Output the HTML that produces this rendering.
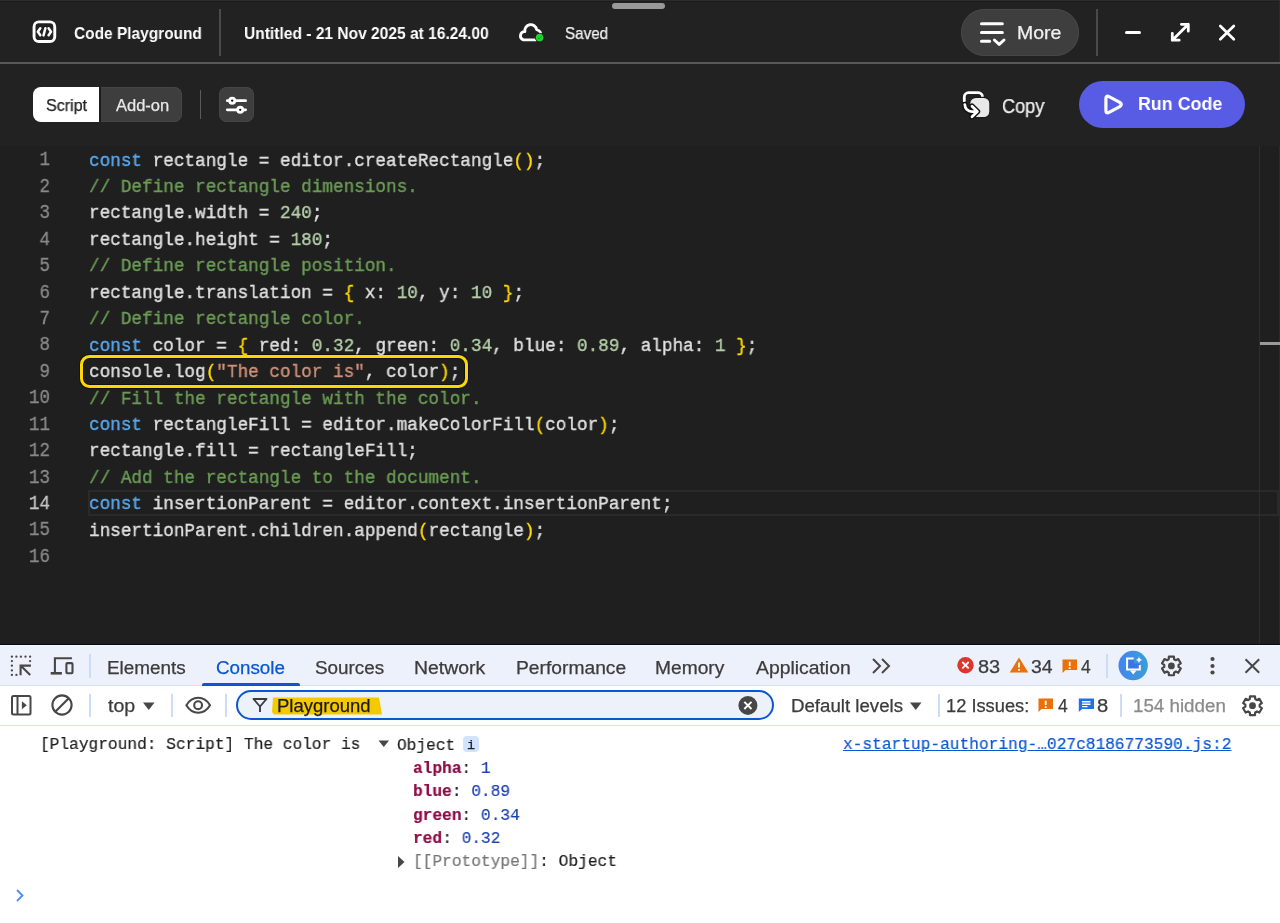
<!DOCTYPE html>
<html><head><meta charset="utf-8">
<style>
*{margin:0;padding:0;box-sizing:border-box}
html,body{width:1280px;height:923px;overflow:hidden;background:#1f1f1f}
body>*{will-change:transform}
body{position:relative;font-family:"Liberation Sans",sans-serif}
.a{position:absolute}
.t{position:absolute;white-space:pre;line-height:1;transform-origin:0 0;-webkit-text-stroke:0.25px currentColor}
#hdr{left:0;top:0;width:1280px;height:63px;background:#222222}
#tb{left:0;top:62px;width:1280px;height:84px;background:#222222;border-top:2px solid #595959}
#ed{left:0;top:146px;width:1280px;height:499px;background:#1f1f1f}
.code{position:absolute;font-family:"Liberation Mono",monospace;font-size:19px;white-space:pre;color:#e0e0e0;line-height:26.43px;transform:scaleX(0.9304);transform-origin:0 0;-webkit-text-stroke:0.38px currentColor}
.ln{position:absolute;left:0;width:50px;text-align:right;font-family:"Liberation Mono",monospace;font-size:20.5px;color:#8a8a8a;line-height:26.43px;transform:scaleX(0.8623);transform-origin:100% 0;-webkit-text-stroke:0.3px currentColor}
.k{color:#58a8ee}.c{color:#6a9c55}.n{color:#b5cea8}.b{color:#ffd700}.s{color:#ce9178}
#dt{left:0;top:645px;width:1280px;height:278px;background:#ffffff}
.m{position:absolute;white-space:pre;font-family:"Liberation Mono",monospace;font-size:17.3px;line-height:18px;color:#1f1f1f;transform:scaleX(0.9364);transform-origin:0 0;-webkit-text-stroke:0.2px currentColor}
.pn{color:#8c0b46}.nv{color:#1a3fb0}
</style></head><body>
<!-- header -->
<div id="hdr" class="a"></div>
<div class="a" style="left:0;top:0;width:1280px;height:1.2px;background:#2c2c2c"></div>
<div class="a" style="left:0;top:1.2px;width:1280px;height:1px;background:#1c1c1c"></div>
<div class="a" style="left:1278.5px;top:0;width:1.5px;height:62px;background:#2b2b2b"></div>
<div class="a" style="left:612px;top:3px;width:53px;height:6px;border-radius:3px;background:#999"></div>
<svg class="a" style="left:26px;top:14px" width="36" height="36" viewBox="26 14 36 36">
 <rect x="34.05" y="21.85" width="20.7" height="19.7" rx="4.8" fill="none" stroke="#fff" stroke-width="2.9"/>
 <path d="M40.3 28.3 L37.9 31.8 L40.3 35.3 M45.4 28.2 L43.5 35.4 M48.6 28.3 L51 31.8 L48.6 35.3" fill="none" stroke="#fff" stroke-width="2.5" stroke-linecap="round" stroke-linejoin="round"/>
</svg>
<div class="t" style="left:74px;top:25px;font-size:17px;font-weight:bold;color:#fff;transform:scaleX(0.909);-webkit-text-stroke:0">Code Playground</div>
<div class="a" style="left:218.6px;top:9px;width:2px;height:47px;background:#4a4a4a"></div>
<div class="t" style="left:244px;top:24.8px;font-size:17px;font-weight:bold;color:#fff;transform:scaleX(0.915);-webkit-text-stroke:0">Untitled - 21 Nov 2025 at 16.24.00</div>
<svg class="a" style="left:510px;top:14px" width="40" height="36" viewBox="510 14 40 36">
 <path d="M536 39.8 H523.4 A4.2 4.2 0 0 1 524.9 31.6 A5.7 5.7 0 0 1 536.6 29.6 Q539.6 30.3 540.5 32.6" fill="none" stroke="#fff" stroke-width="2.8" stroke-linecap="round" stroke-linejoin="round"/>
 <circle cx="539.6" cy="37.6" r="4.3" fill="#20d52f" stroke="#1a1a1a" stroke-width="0.9"/>
 <path d="M537.6 37.9 L539 39.1 L541.6 36.3" fill="none" stroke="#139a22" stroke-width="0.9"/>
</svg>
<div class="t" style="left:565px;top:24.9px;font-size:16.5px;color:#f2f2f2;transform:scaleX(0.922)">Saved</div>
<div class="a" style="left:961px;top:9px;width:118px;height:47px;border-radius:24px;background:#3e3e3e;box-shadow:inset 0 0 0 1px #474747"></div>
<svg class="a" style="left:970px;top:14px" width="40" height="36" viewBox="970 14 40 36">
 <path d="M981.5 23.75 H1002.3 M981.5 32.5 H1002.3 M981.5 41.3 H989.6" fill="none" stroke="#fff" stroke-width="3.1" stroke-linecap="round"/>
 <path d="M994.4 40 L999.2 44.4 L1004 40" fill="none" stroke="#fff" stroke-width="3" stroke-linecap="round" stroke-linejoin="round"/>
</svg>
<div class="t" style="left:1017px;top:24.3px;font-size:18.5px;color:#f0f0f0;transform:scaleX(1.052)">More</div>
<div class="a" style="left:1096.2px;top:9px;width:2px;height:47px;background:#4a4a4a"></div>
<div class="a" style="left:1125.3px;top:30.8px;width:15.6px;height:3px;background:#fff;border-radius:1.5px"></div>
<svg class="a" style="left:1165px;top:18px" width="30" height="28" viewBox="1165 18 30 28">
 <path d="M1172.3 40.2 L1188.3 24.3 M1181.4 24.3 H1188.3 V31.2 M1172.3 33.3 V40.2 H1179.2" fill="none" stroke="#fff" stroke-width="2.8" stroke-linecap="round" stroke-linejoin="round"/>
</svg>
<svg class="a" style="left:1214px;top:20px" width="26" height="26" viewBox="1214 20 26 26">
 <path d="M1220.3 26 L1233.8 39.3 M1233.8 26 L1220.3 39.3" fill="none" stroke="#fff" stroke-width="2.7" stroke-linecap="round"/>
</svg>
<!-- toolbar -->
<div id="tb" class="a"></div>
<div class="a" style="left:33px;top:87px;width:149px;height:35px;border-radius:8px;background:#3e3e3e;box-shadow:inset 0 0 0 1px #464646"></div>
<div class="a" style="left:33px;top:87px;width:66px;height:35px;border-radius:8px 0 0 8px;background:#fff"></div>
<div class="a" style="left:99px;top:87px;width:1.5px;height:35px;background:#1e1e1e"></div>
<div class="t" style="left:46px;top:97.4px;font-size:16.5px;color:#222;transform:scaleX(0.973)">Script</div>
<div class="t" style="left:116px;top:97.4px;font-size:16.5px;color:#e8e8e8">Add-on</div>
<div class="a" style="left:199.8px;top:90px;width:1.3px;height:29px;background:#5a5a5a"></div>
<div class="a" style="left:219px;top:87px;width:35px;height:35px;border-radius:8px;background:#3e3e3e;box-shadow:inset 0 0 0 1px #464646"></div>
<svg class="a" style="left:219px;top:87px" width="35" height="35" viewBox="219 87 35 35">
 <path d="M227.3 100.7 H245.6 M227.3 109.8 H245.6" stroke="#fff" stroke-width="2.8" stroke-linecap="round"/>
 <circle cx="232.2" cy="100.7" r="2.55" fill="#111" stroke="#fff" stroke-width="2.8"/>
 <circle cx="240.2" cy="109.8" r="2.55" fill="#111" stroke="#fff" stroke-width="2.8"/>
</svg>
<svg class="a" style="left:955px;top:84px" width="44" height="40" viewBox="955 84 44 40">
 <path d="M964.3 101 V97 A4.3 4.3 0 0 1 968.6 92.7 H978.3 A4.2 4.2 0 0 1 982.5 96.9" fill="none" stroke="#fff" stroke-width="2.8" stroke-linecap="round"/>
 <rect x="969.7" y="97.4" width="20.2" height="20.2" rx="6" fill="#e8e8e8" stroke="#1a1a1a" stroke-width="1.2"/>
 <path d="M964.8 104.6 A7 7 0 0 0 971.8 111.6 H976.5 M972 106.2 L977.4 111.5 L972 116.8" fill="none" stroke="#111" stroke-width="5.6" stroke-linecap="round" stroke-linejoin="round"/>
 <path d="M964.8 104.6 A7 7 0 0 0 971.8 111.6 H976.5 M972 106.2 L977.4 111.5 L972 116.8" fill="none" stroke="#fff" stroke-width="2.8" stroke-linecap="round" stroke-linejoin="round"/>
</svg>
<div class="t" style="left:1001.5px;top:95.7px;font-size:20px;color:#eeeeee;transform:scaleX(0.905)">Copy</div>
<div class="a" style="left:1079px;top:81px;width:166px;height:47px;border-radius:24px;background:#585ce5"></div>
<svg class="a" style="left:1098px;top:88px" width="32" height="32" viewBox="1098 88 32 32">
 <path d="M1105.9 98.6 Q1105.9 95 1109 96.6 L1119.8 102.4 Q1122.8 104.5 1119.8 106.6 L1109 112.4 Q1105.9 114 1105.9 110.4 Z" fill="none" stroke="#fff" stroke-width="3.2" stroke-linejoin="round"/>
</svg>
<div class="t" style="left:1138px;top:94px;font-size:19.2px;font-weight:bold;color:#fff;transform:scaleX(0.93);-webkit-text-stroke:0">Run Code</div>
<!-- editor -->
<div id="ed" class="a"></div>
<div class="a" style="left:88px;top:490px;width:1191px;height:26px;border:2px solid #2a2a2a"></div>
<div class="a" style="left:1259px;top:146px;width:1px;height:499px;background:#2e2e2e"></div>
<div class="a" style="left:1279px;top:146px;width:1px;height:499px;background:#2a2a2a"></div>
<div class="a" style="left:1260px;top:342px;width:20px;height:3px;background:#9a9a9a"></div>
<div class="a" style="left:80px;top:355px;width:388px;height:33px;border:3px solid #ffd700;border-radius:9.5px;box-shadow:0 0 0 1px rgba(0,0,0,.45),inset 0 0 0 1px rgba(0,0,0,.45)"></div>
<div class="ln" style="top:147.43px;color:#8a8a8a">1</div>
<div class="code" style="left:88.8px;top:147.63px"><span class="k">const</span> rectangle = editor.createRectangle<span class="b">()</span>;</div>
<div class="ln" style="top:173.86px;color:#8a8a8a">2</div>
<div class="code" style="left:88.8px;top:174.06px"><span class="c">// Define rectangle dimensions.</span></div>
<div class="ln" style="top:200.29px;color:#8a8a8a">3</div>
<div class="code" style="left:88.8px;top:200.49px">rectangle.width = <span class="n">240</span>;</div>
<div class="ln" style="top:226.72px;color:#8a8a8a">4</div>
<div class="code" style="left:88.8px;top:226.92px">rectangle.height = <span class="n">180</span>;</div>
<div class="ln" style="top:253.15px;color:#8a8a8a">5</div>
<div class="code" style="left:88.8px;top:253.35px"><span class="c">// Define rectangle position.</span></div>
<div class="ln" style="top:279.58px;color:#8a8a8a">6</div>
<div class="code" style="left:88.8px;top:279.78px">rectangle.translation = <span class="b">{</span> x: <span class="n">10</span>, y: <span class="n">10</span> <span class="b">}</span>;</div>
<div class="ln" style="top:306.01px;color:#8a8a8a">7</div>
<div class="code" style="left:88.8px;top:306.21px"><span class="c">// Define rectangle color.</span></div>
<div class="ln" style="top:332.44px;color:#8a8a8a">8</div>
<div class="code" style="left:88.8px;top:332.64px"><span class="k">const</span> color = <span class="b">{</span> red: <span class="n">0.32</span>, green: <span class="n">0.34</span>, blue: <span class="n">0.89</span>, alpha: <span class="n">1</span> <span class="b">}</span>;</div>
<div class="ln" style="top:358.87px;color:#8a8a8a">9</div>
<div class="code" style="left:88.8px;top:359.07px">console.log<span class="b">(</span><span class="s">"The color is"</span>, color<span class="b">)</span>;</div>
<div class="ln" style="top:385.30px;color:#8a8a8a">10</div>
<div class="code" style="left:88.8px;top:385.50px"><span class="c">// Fill the rectangle with the color.</span></div>
<div class="ln" style="top:411.73px;color:#8a8a8a">11</div>
<div class="code" style="left:88.8px;top:411.93px"><span class="k">const</span> rectangleFill = editor.makeColorFill<span class="b">(</span>color<span class="b">)</span>;</div>
<div class="ln" style="top:438.16px;color:#8a8a8a">12</div>
<div class="code" style="left:88.8px;top:438.36px">rectangle.fill = rectangleFill;</div>
<div class="ln" style="top:464.59px;color:#8a8a8a">13</div>
<div class="code" style="left:88.8px;top:464.79px"><span class="c">// Add the rectangle to the document.</span></div>
<div class="ln" style="top:491.02px;color:#c6c6c6">14</div>
<div class="code" style="left:88.8px;top:491.22px"><span class="k">const</span> insertionParent = editor.context.insertionParent;</div>
<div class="ln" style="top:517.45px;color:#8a8a8a">15</div>
<div class="code" style="left:88.8px;top:517.65px">insertionParent.children.append<span class="b">(</span>rectangle<span class="b">)</span>;</div>
<div class="ln" style="top:543.88px;color:#8a8a8a">16</div>
<div class="code" style="left:88.8px;top:544.08px"></div>
<div class="a" style="left:0;top:643.5px;width:1280px;height:1.5px;background:#0a0a0a"></div>
<!-- devtools -->
<div id="dt" class="a"></div>
<div class="a" style="left:0;top:645px;width:1280px;height:41px;background:#edf1fb;border-top:1px solid #f2f9ff;border-bottom:1px solid #d3e3fd"></div>
<div class="a" style="left:0;top:725px;width:1280px;height:1px;background:#d3e3fd"></div>
<svg class="a" style="left:5px;top:650px" width="75" height="32" viewBox="5 650 75 32">
 <circle cx="11.9" cy="656.7" r="1.15" fill="#474747"/><circle cx="16.4" cy="656.7" r="1.15" fill="#474747"/><circle cx="20.9" cy="656.7" r="1.15" fill="#474747"/><circle cx="25.5" cy="656.7" r="1.15" fill="#474747"/><circle cx="30.1" cy="656.7" r="1.15" fill="#474747"/><circle cx="11.9" cy="661.1" r="1.15" fill="#474747"/><circle cx="11.9" cy="665.7" r="1.15" fill="#474747"/><circle cx="11.9" cy="670.4" r="1.15" fill="#474747"/><circle cx="11.9" cy="674.9" r="1.15" fill="#474747"/><circle cx="16.4" cy="674.9" r="1.15" fill="#474747"/><circle cx="30.1" cy="661.1" r="1.15" fill="#474747"/>
 <path d="M20.6 675.3 V665.6 H30.9 M20.6 665.6 L30.2 675" fill="none" stroke="#474747" stroke-width="2.1"/>
 <path d="M54.9 673.1 V658.2 H71.9" fill="none" stroke="#474747" stroke-width="2.1"/>
 <path d="M50.7 673.3 H61.9" fill="none" stroke="#474747" stroke-width="2.6"/>
 <rect x="66.4" y="663.1" width="6.1" height="10.2" rx="1" fill="none" stroke="#474747" stroke-width="2.1"/>
</svg>

<div class="a" style="left:89px;top:654px;width:1.6px;height:24px;background:#cddcf6"></div>
<div class="t" style="left:107px;top:660px;font-size:17.5px;color:#3c3c3c;transform:scaleX(1.079)">Elements</div>
<div class="t" style="left:216px;top:660px;font-size:17.5px;color:#0b57d0;transform:scaleX(1.073)">Console</div>
<div class="a" style="left:202px;top:683.3px;width:98px;height:3.2px;background:#0b57d0;border-radius:2px 2px 0 0"></div>
<div class="t" style="left:314.5px;top:660px;font-size:17.5px;color:#3c3c3c;transform:scaleX(1.078)">Sources</div>
<div class="t" style="left:413.5px;top:660px;font-size:17.5px;color:#3c3c3c;transform:scaleX(1.11)">Network</div>
<div class="t" style="left:515.5px;top:660px;font-size:17.5px;color:#3c3c3c;transform:scaleX(1.10)">Performance</div>
<div class="t" style="left:655px;top:660px;font-size:17.5px;color:#3c3c3c;transform:scaleX(1.097)">Memory</div>
<div class="t" style="left:756px;top:660px;font-size:17.5px;color:#3c3c3c;transform:scaleX(1.106)">Application</div>
<svg class="a" style="left:871px;top:657px" width="21" height="18" viewBox="0 0 21 18">
 <path d="M2 2 L9 9 L2 16 M11 2 L18 9 L11 16" fill="none" stroke="#474747" stroke-width="2"/>
</svg>
<svg class="a" style="left:957px;top:657px" width="18" height="17" viewBox="0 0 18 17">
 <circle cx="8.5" cy="8.2" r="8.2" fill="#dc362e"/>
 <path d="M5.3 5 L11.7 11.4 M11.7 5 L5.3 11.4" stroke="#fff" stroke-width="1.8"/>
</svg>
<div class="t" style="left:977.5px;top:659px;font-size:17.5px;color:#3c3c3c;transform:scaleX(1.14)">83</div>
<svg class="a" style="left:1009px;top:657px" width="20" height="16" viewBox="0 0 20 16">
 <path d="M10 0.6 L19.3 15.5 H0.7 Z" fill="#e8710a"/>
 <path d="M10 5.5 V10.5 M10 12 V13.8" stroke="#fff" stroke-width="1.8"/>
</svg>
<div class="t" style="left:1031px;top:659px;font-size:17.5px;color:#3c3c3c;transform:scaleX(1.11)">34</div>
<svg class="a" style="left:1062px;top:659px" width="16" height="15" viewBox="0 0 16 15">
 <path d="M0.5 0.5 H15 V11 H3.5 L0.5 14 Z" fill="#e8710a"/>
 <path d="M7.7 2.8 V7 M7.7 8.3 V10" stroke="#fff" stroke-width="1.8"/>
</svg>
<div class="t" style="left:1081px;top:659px;font-size:17.5px;color:#3c3c3c">4</div>
<div class="a" style="left:1106px;top:654px;width:1.6px;height:24px;background:#cddcf6"></div>
<svg class="a" style="left:1115px;top:648px" width="36" height="36" viewBox="1115 648 36 36">
 <defs><linearGradient id="g1" x1="0" y1="0" x2="1" y2="0"><stop offset="0" stop-color="#4285f0"/><stop offset="1" stop-color="#3a9ed6"/></linearGradient></defs>
 <circle cx="1133.15" cy="665.55" r="14.7" fill="url(#g1)"/>
 <path d="M1127.1 658.4 H1134 V663.5 H1139.8 V669.6 H1127.1 Z" fill="#3a76e4"/>
 <path d="M1133.7 658.4 H1127.1 V669.6 H1139.8 V665" fill="none" stroke="#fff" stroke-width="2"/>
 <path d="M1129.9 670.5 H1136.5 L1133.2 674.6 Z" fill="#fff"/>
 <path d="M1139 656.6 Q1139.4 659.6 1142.4 660 Q1139.4 660.4 1139 663.4 Q1138.6 660.4 1135.6 660 Q1138.6 659.6 1139 656.6 Z" fill="#fff"/>
</svg>
<svg class="a" style="left:1155px;top:650px" width="33" height="32" viewBox="1155 650 33 32">
 <path d="M1168.70 659.22 L1168.89 656.53 L1173.91 656.53 L1174.10 659.22 L1175.83 660.23 L1178.26 659.04 L1180.77 663.39 L1178.53 664.90 L1178.53 666.90 L1180.77 668.41 L1178.26 672.76 L1175.83 671.57 L1174.10 672.58 L1173.91 675.27 L1168.89 675.27 L1168.70 672.58 L1166.97 671.57 L1164.54 672.76 L1162.03 668.41 L1164.27 666.90 L1164.27 664.90 L1162.03 663.39 L1164.54 659.04 L1166.97 660.23 Z" fill="none" stroke="#474747" stroke-width="2.2" stroke-linejoin="round"/>
 <circle cx="1171.4" cy="665.9" r="3.4" fill="#474747"/>
</svg>
<svg class="a" style="left:1208px;top:656px" width="9" height="20" viewBox="0 0 9 20">
 <circle cx="4.5" cy="3" r="2.1" fill="#474747"/><circle cx="4.5" cy="10" r="2.1" fill="#474747"/><circle cx="4.5" cy="16.5" r="2.1" fill="#474747"/>
</svg>
<svg class="a" style="left:1243px;top:657px" width="19" height="18" viewBox="0 0 19 18">
 <path d="M2.5 2.2 L16.2 15.8 M16.2 2.2 L2.5 15.8" stroke="#474747" stroke-width="2"/>
</svg>
<!-- console toolbar -->
<svg class="a" style="left:10px;top:694px" width="22" height="22" viewBox="0 0 22 22">
 <rect x="2" y="2" width="18.5" height="18.5" rx="1.5" fill="none" stroke="#474747" stroke-width="2"/>
 <path d="M7.5 2 V20.5" stroke="#474747" stroke-width="2"/>
 <path d="M11.9 7.3 L16.8 11.2 L11.9 15.2 Z" fill="#474747"/>
</svg>
<svg class="a" style="left:50px;top:693px" width="24" height="24" viewBox="0 0 24 24">
 <circle cx="12" cy="12" r="9.6" fill="none" stroke="#474747" stroke-width="2.1"/>
 <path d="M5.5 18.5 L18.5 5.5" stroke="#474747" stroke-width="2.1"/>
</svg>
<div class="a" style="left:89px;top:694px;width:1.6px;height:23px;background:#cddcf6"></div>
<div class="t" style="left:108px;top:698px;font-size:17.5px;color:#3c3c3c;transform:scaleX(1.12)">top</div>
<svg class="a" style="left:142px;top:701px" width="14" height="10" viewBox="0 0 14 10">
 <path d="M1 1.5 H12.5 L6.75 9 Z" fill="#474747"/>
</svg>
<div class="a" style="left:171px;top:694px;width:1.6px;height:23px;background:#cddcf6"></div>
<svg class="a" style="left:180px;top:690px" width="36" height="30" viewBox="180 690 36 30">
 <path d="M186.4 705.2 C190 699.2 194 697.8 198.2 697.8 C202.4 697.8 206.4 699.2 210 705.2 C206.4 711.3 202.4 712.7 198.2 712.7 C194 712.7 190 711.3 186.4 705.2 Z" fill="none" stroke="#474747" stroke-width="2.1"/>
 <circle cx="198.1" cy="705.2" r="3.9" fill="none" stroke="#474747" stroke-width="2.1"/>
</svg>
<div class="a" style="left:225px;top:694px;width:1.6px;height:23px;background:#cddcf6"></div>
<div class="a" style="left:236px;top:690px;width:538px;height:30px;border-radius:15px;background:#edf2fa;border:2.6px solid #0b57d0"></div>
<svg class="a" style="left:252px;top:697px" width="16" height="16" viewBox="0 0 16 16">
 <path d="M1.5 2 H14.5 L8 9.5 Z M8 9.5 V15" fill="none" stroke="#3c3c3c" stroke-width="1.9" stroke-linejoin="round"/>
</svg>
<svg class="a" style="left:271px;top:697px" width="113" height="19" viewBox="0 0 113 19">
 <path d="M2 0.5 H108 L111 17.5 H3 L1 15 Z" fill="#f5c900"/>
</svg>
<div class="t" style="left:276.5px;top:698px;font-size:17.5px;color:#1a1a1a;transform:scaleX(1.057)">Playground</div>
<svg class="a" style="left:737px;top:695px" width="22" height="21" viewBox="0 0 22 21">
 <circle cx="10.9" cy="10.4" r="9.5" fill="#474747"/>
 <path d="M7.3 6.8 L14.5 14 M14.5 6.8 L7.3 14" stroke="#fff" stroke-width="1.9"/>
</svg>
<div class="t" style="left:791px;top:698px;font-size:17.5px;color:#3c3c3c;transform:scaleX(1.066)">Default levels</div>
<svg class="a" style="left:909px;top:701px" width="14" height="10" viewBox="0 0 14 10">
 <path d="M1 1.5 H12.5 L6.75 9 Z" fill="#474747"/>
</svg>
<div class="a" style="left:938px;top:694px;width:1.6px;height:23px;background:#cddcf6"></div>
<div class="t" style="left:945.5px;top:698px;font-size:17.5px;color:#3c3c3c;transform:scaleX(1.044)">12 Issues:</div>
<svg class="a" style="left:1038px;top:698px" width="16" height="15" viewBox="0 0 16 15">
 <path d="M0.5 0.5 H15 V11 H3.5 L0.5 14 Z" fill="#e8710a"/>
 <path d="M7.7 2.8 V7 M7.7 8.3 V10" stroke="#fff" stroke-width="1.8"/>
</svg>
<div class="t" style="left:1058px;top:698px;font-size:17.5px;color:#3c3c3c">4</div>
<svg class="a" style="left:1078px;top:698px" width="17" height="15" viewBox="0 0 17 15">
 <path d="M0.8 0.5 H16 V11 H4 L0.8 14 Z" fill="#1a73e8"/>
 <path d="M4 3.7 H12.5 M4 6.2 H12.5 M4 8.6 H9.5" stroke="#fff" stroke-width="1.4"/>
</svg>
<div class="t" style="left:1097px;top:698px;font-size:17.5px;color:#3c3c3c;transform:scaleX(1.15)">8</div>
<div class="a" style="left:1120px;top:694px;width:1.6px;height:23px;background:#cddcf6"></div>
<div class="t" style="left:1133px;top:698px;font-size:17.5px;color:#8a8a8a;transform:scaleX(1.072)">154 hidden</div>
<svg class="a" style="left:1236px;top:690px" width="33" height="32" viewBox="1236 690 33 32">
 <path d="M1249.80 699.02 L1249.99 696.33 L1255.01 696.33 L1255.20 699.02 L1256.93 700.03 L1259.36 698.84 L1261.87 703.19 L1259.63 704.70 L1259.63 706.70 L1261.87 708.21 L1259.36 712.56 L1256.93 711.37 L1255.20 712.38 L1255.01 715.07 L1249.99 715.07 L1249.80 712.38 L1248.07 711.37 L1245.64 712.56 L1243.13 708.21 L1245.37 706.70 L1245.37 704.70 L1243.13 703.19 L1245.64 698.84 L1248.07 700.03 Z" fill="none" stroke="#474747" stroke-width="2.2" stroke-linejoin="round"/>
 <circle cx="1252.5" cy="705.7" r="3.4" fill="#474747"/>
</svg>
<!-- console messages -->
<div class="m" style="left:40px;top:736.2px">[Playground: Script] The color is</div>
<svg class="a" style="left:378px;top:740px" width="12" height="8" viewBox="0 0 12 8"><path d="M0.5 0.5 H11 L5.75 7 Z" fill="#474747"/></svg>
<div class="m" style="left:396.5px;top:736.7px">Object</div>
<div class="a" style="left:463px;top:736px;width:16.2px;height:16.2px;border-radius:4px;background:#d3e3fd"></div>
<div class="t" style="left:467.4px;top:738.6px;font-size:13.5px;font-family:'Liberation Mono',monospace;color:#1f1f1f">i</div>
<div class="m" style="left:843px;top:736.2px;color:#0b57d0;text-decoration:underline">x-startup-authoring-…027c8186773590.js:2</div>
<div class="m" style="left:413px;top:760.2px"><b class="pn">alpha</b>: <span class="nv">1</span></div>
<div class="m" style="left:413px;top:783.2px"><b class="pn">blue</b>: <span class="nv">0.89</span></div>
<div class="m" style="left:413px;top:807.2px"><b class="pn">green</b>: <span class="nv">0.34</span></div>
<div class="m" style="left:413px;top:830.2px"><b class="pn">red</b>: <span class="nv">0.32</span></div>
<svg class="a" style="left:397px;top:855px" width="9" height="14" viewBox="0 0 9 14"><path d="M1 1 L7.5 7 L1 13 Z" fill="#474747"/></svg>
<div class="m" style="left:413px;top:853.2px"><span style="color:#777">[[Prototype]]</span>: Object</div>
<svg class="a" style="left:14px;top:888px" width="12" height="15" viewBox="0 0 12 15"><path d="M3 2 L8.5 7.5 L3 13" fill="none" stroke="#4c8bf5" stroke-width="1.8"/></svg>

</body></html>
